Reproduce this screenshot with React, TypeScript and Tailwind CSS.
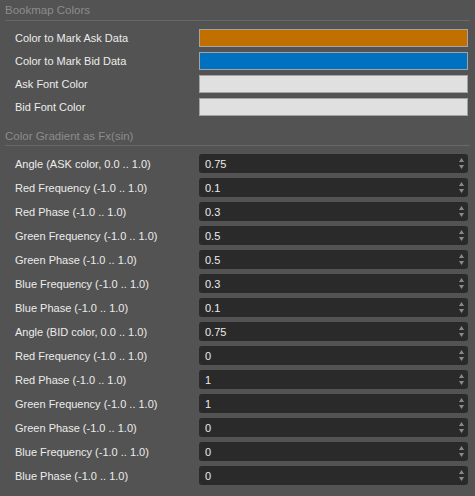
const colorRows = [
  { label: "Color to Mark Ask Data", color: "bg-[#c17000]" },
  { label: "Color to Mark Bid Data", color: "bg-[#0070c0]" },
  { label: "Ask Font Color", color: "bg-[#e0e0e0]" },
  { label: "Bid Font Color", color: "bg-[#e0e0e0]" },
];

const gradientRows = [
  { label: "Angle (ASK color, 0.0 .. 1.0)", value: "0.75" },
  { label: "Red Frequency (-1.0 .. 1.0)", value: "0.1" },
  { label: "Red Phase (-1.0 .. 1.0)", value: "0.3" },
  { label: "Green Frequency (-1.0 .. 1.0)", value: "0.5" },
  { label: "Green Phase (-1.0 .. 1.0)", value: "0.5" },
  { label: "Blue Frequency (-1.0 .. 1.0)", value: "0.3" },
  { label: "Blue Phase (-1.0 .. 1.0)", value: "0.1" },
  { label: "Angle (BID color, 0.0 .. 1.0)", value: "0.75" },
  { label: "Red Frequency (-1.0 .. 1.0)", value: "0" },
  { label: "Red Phase (-1.0 .. 1.0)", value: "1" },
  { label: "Green Frequency (-1.0 .. 1.0)", value: "1" },
  { label: "Green Phase (-1.0 .. 1.0)", value: "0" },
  { label: "Blue Frequency (-1.0 .. 1.0)", value: "0" },
  { label: "Blue Phase (-1.0 .. 1.0)", value: "0" },
];

function SectionHeader({ title, className = "" }: { title: string; className?: string }) {
  return (
    <div className={`mx-[5px] h-[21px] border-b border-[#686868] text-[11.5px] leading-[14px] text-[#8c8c8c] ${className}`}>
      {title}
    </div>
  );
}

function Spinner({ value }: { value: string }) {
  return (
    <div className="flex h-[19px] flex-1 items-center justify-between rounded-[3px] bg-[#2a2a2a] pl-[6px] pr-[3px]">
      <span className="leading-[14px] text-[#ececec]">{value}</span>
      <svg width="7" height="13" viewBox="0 0 7 13" className="text-[#8a8a8a]">
        <path d="M3.5 1 L6 5 L1 5 Z" fill="currentColor" />
        <path d="M1 8 L6 8 L3.5 12 Z" fill="currentColor" />
      </svg>
    </div>
  );
}

export default function App() {
  return (
    <div className="h-[496px] w-[475px] overflow-hidden bg-[#535353] font-['Liberation_Sans',Arial,sans-serif] text-[11px]">
      <SectionHeader title="Bookmap Colors" className="pt-[3px]" />
      <div className="mt-[8px] flex flex-col gap-[5px] pl-[15px] pr-[7px]">
        {colorRows.map((r) => (
          <div key={r.label} className="flex h-[18px] items-center">
            <span className="w-[184px] leading-[14px] text-[#ececec]">{r.label}</span>
            <div className={`h-[18px] flex-1 border border-[#a4a4a4] ${r.color}`} />
          </div>
        ))}
      </div>
      <SectionHeader title="Color Gradient as Fx(sin)" className="mt-[9px] pt-[4px]" />
      <div className="mt-[8px] flex flex-col gap-[5px] pl-[15px] pr-[7px]">
        {gradientRows.map((r, i) => (
          <div key={i} className="flex h-[19px] items-center">
            <span className="w-[184px] leading-[14px] text-[#ececec]">{r.label}</span>
            <Spinner value={r.value} />
          </div>
        ))}
      </div>
    </div>
  );
}
